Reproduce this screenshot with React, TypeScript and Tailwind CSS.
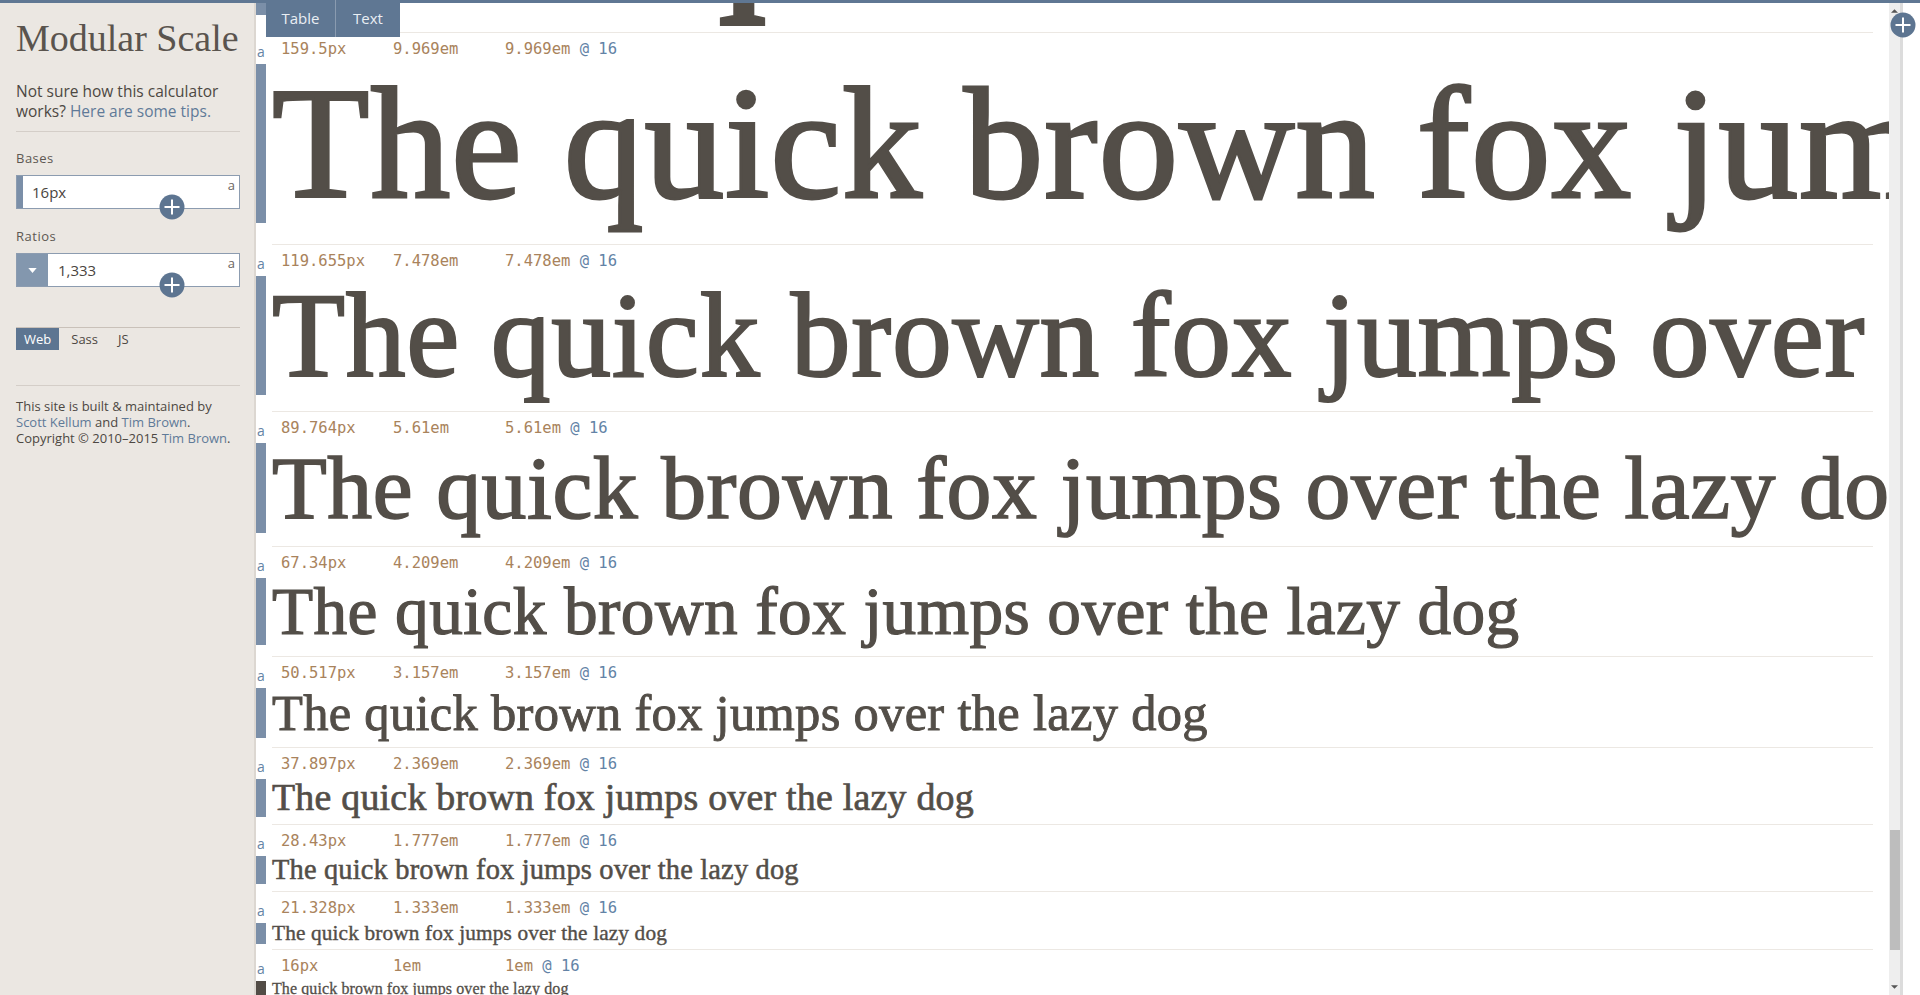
import React from "react";

const rows = [
  { px: "212.613px", em: "13.288em", size: 212.613, pb: 17 },
  { px: "159.5px", em: "9.969em", size: 159.5 },
  { px: "119.655px", em: "7.478em", size: 119.655 },
  { px: "89.764px", em: "5.61em", size: 89.764 },
  { px: "67.34px", em: "4.209em", size: 67.34 },
  { px: "50.517px", em: "3.157em", size: 50.517 },
  { px: "37.897px", em: "2.369em", size: 37.897 },
  { px: "28.43px", em: "1.777em", size: 28.43 },
  { px: "21.328px", em: "1.333em", size: 21.328 },
  { px: "16px", em: "1em", size: 16, base: true },
  { px: "12px", em: "0.75em", size: 12 },
];

const SAMPLE = "The quick brown fox jumps over the lazy dog";

function PlusCircle({ className }: { className?: string }) {
  return (
    <svg viewBox="0 0 26 26" className={className}>
      <circle cx="13" cy="13" r="12.5" fill="#5d7591" />
      <path d="M13 5.5v15M5.5 13h15" stroke="#ffffff" strokeWidth="2" />
    </svg>
  );
}

interface RowProps {
  px: string;
  em: string;
  size: number;
  base?: boolean;
  pb?: number;
}

function ScaleRow({ px, em, size, base, pb }: RowProps) {
  // espace sous la ligne d'exemple, grandit un peu avec la taille
  const bottom = pb ?? 3 + size * 0.11;
  return (
    <div className="flex">
      <div className="w-[10px] shrink-0 flex flex-col">
        <div className="h-[32px] pt-[13px] pl-[1px] text-[14px] leading-[14px] text-[#6584a5] font-['Open_Sans',sans-serif]">
          a
        </div>
        <div className={base ? "bg-[#524c46]" : "bg-[#7b8fa8]"} style={{ height: size }} />
      </div>
      <div className="ml-[6px] mr-[16px] flex-1 min-w-0 border-t border-[#ece8e3]">
        <div className="h-[31px] pl-[9px] pt-[6px] flex text-[15.5px] leading-[20px] font-['DejaVu_Sans_Mono',monospace] text-[#a9835c]">
          <span className="w-[112px] shrink-0">{px}</span>
          <span className="w-[112px] shrink-0">{em}</span>
          <span className="whitespace-nowrap">
            {em} <span className="text-[#6383a6]">@ 16</span>
          </span>
        </div>
        <div
          className="whitespace-nowrap leading-none tracking-[0.006em] text-[#534e48] font-['Liberation_Serif',serif] [-webkit-text-stroke:0.018em_#534e48]"
          style={{ fontSize: size, paddingBottom: bottom }}
        >
          {SAMPLE}
        </div>
      </div>
    </div>
  );
}

function Sidebar() {
  return (
    <aside className="w-[256px] shrink-0 bg-[#ebe7e2] border-r-[2px] border-[#dcd7d1] pl-4 pr-[14px] font-['Open_Sans',sans-serif] text-[#4d4842]">
      <h1 className="pt-[16px] text-[38px] leading-none text-[#5a544e] font-['Liberation_Serif',serif] whitespace-nowrap">
        Modular Scale
      </h1>
      <p className="mt-[24px] text-[15.5px] leading-[20px]">
        Not sure how this calculator works? <span className="text-[#5f7a98]">Here are some tips.</span>
      </p>
      <div className="mt-[10px] border-t border-[#d4cec8]" />

      <div className="mt-[18px] text-[13px] leading-[16px] tracking-[0.5px] text-[#5d5852]">Bases</div>
      <div className="relative mt-[9px] h-[34px] flex bg-white border border-[#8c9cb0]">
        <div className="w-[6px] bg-[#7b8fa8]" />
        <div className="pl-[9px] text-[15px] leading-[32px] text-[#4a4540]">16px</div>
        <span className="absolute right-[4px] top-[1px] text-[13px] leading-[16px] text-[#6a6560]">a</span>
        <PlusCircle className="absolute left-[142px] top-[18px] w-[26px] h-[26px]" />
      </div>

      <div className="mt-[19px] text-[13px] leading-[16px] tracking-[0.5px] text-[#5d5852]">Ratios</div>
      <div className="relative mt-[9px] h-[34px] flex bg-white border border-[#8c9cb0]">
        <div className="w-[31px] bg-[#8397ae] flex items-center justify-center">
          <svg viewBox="0 0 10 6" className="w-[9px] h-[5px]">
            <path d="M0 0h10L5 6z" fill="#ffffff" />
          </svg>
        </div>
        <div className="pl-[10px] text-[15px] leading-[32px] text-[#4a4540]">1,333</div>
        <span className="absolute right-[4px] top-[1px] text-[13px] leading-[16px] text-[#6a6560]">a</span>
        <PlusCircle className="absolute left-[142px] top-[18px] w-[26px] h-[26px]" />
      </div>

      <div className="mt-[40px] border-t border-[#c9c1b9]" />
      <div className="flex text-[13px] leading-[22px]">
        <span className="px-[8px] bg-[#5d7591] text-white">Web</span>
        <span className="px-[12px]">Sass</span>
        <span className="px-[8px]">JS</span>
      </div>

      <div className="mt-[35px] border-t border-[#d4cec8]" />
      <p className="mt-[12px] text-[13px] leading-[16px] whitespace-nowrap">
        This site is built &amp; maintained by
        <br />
        <span className="text-[#5f7a98]">Scott Kellum</span> and <span className="text-[#5f7a98]">Tim Brown</span>.
        <br />
        Copyright © 2010–2015 <span className="text-[#5f7a98]">Tim Brown</span>.
      </p>
    </aside>
  );
}

export default function App() {
  return (
    <div className="relative w-[1920px] h-[995px] overflow-hidden flex flex-col bg-white">
      <div className="h-[3px] shrink-0 bg-[#5f7793]" />
      <div className="flex flex-1 min-h-0">
        <Sidebar />
        <main className="flex-1 min-w-0 overflow-hidden bg-white">
          {/* la page est défilée : la ligne de 212px est presque hors écran */}
          <div className="mt-[-233px]">
            {rows.map((r) => (
              <ScaleRow key={r.px} {...r} />
            ))}
          </div>
        </main>
        <div className="w-[14px] shrink-0 flex flex-col bg-[#eeeeee] border-r-[3px] border-[#dcdcdc]">
          <div className="h-[16px] flex items-center justify-center">
            <svg viewBox="0 0 8 4" className="w-[7px] h-[4px]">
              <path d="M0 4h8L4 0z" fill="#555555" />
            </svg>
          </div>
          <div className="flex-1 flex flex-col justify-end pb-[29px]">
            <div className="ml-[1px] w-[10px] h-[120px] bg-[#bdbdbd]" />
          </div>
          <div className="h-[16px] flex items-center justify-center">
            <svg viewBox="0 0 8 4" className="w-[7px] h-[4px]">
              <path d="M0 0h8L4 4z" fill="#555555" />
            </svg>
          </div>
        </div>
        <div className="w-[17px] shrink-0 bg-white" />
      </div>

      <div className="absolute left-[266px] top-0 h-[37px] flex bg-[#5f7793] text-[15px] text-[#e9eef3] font-['Open_Sans',sans-serif]">
        <span className="w-[70px] flex items-center justify-center border-r border-[#8a9bb0]">Table</span>
        <span className="w-[64px] flex items-center justify-center">Text</span>
      </div>
      <PlusCircle className="absolute left-[1890px] top-[12px] w-[26px] h-[26px]" />
    </div>
  );
}
